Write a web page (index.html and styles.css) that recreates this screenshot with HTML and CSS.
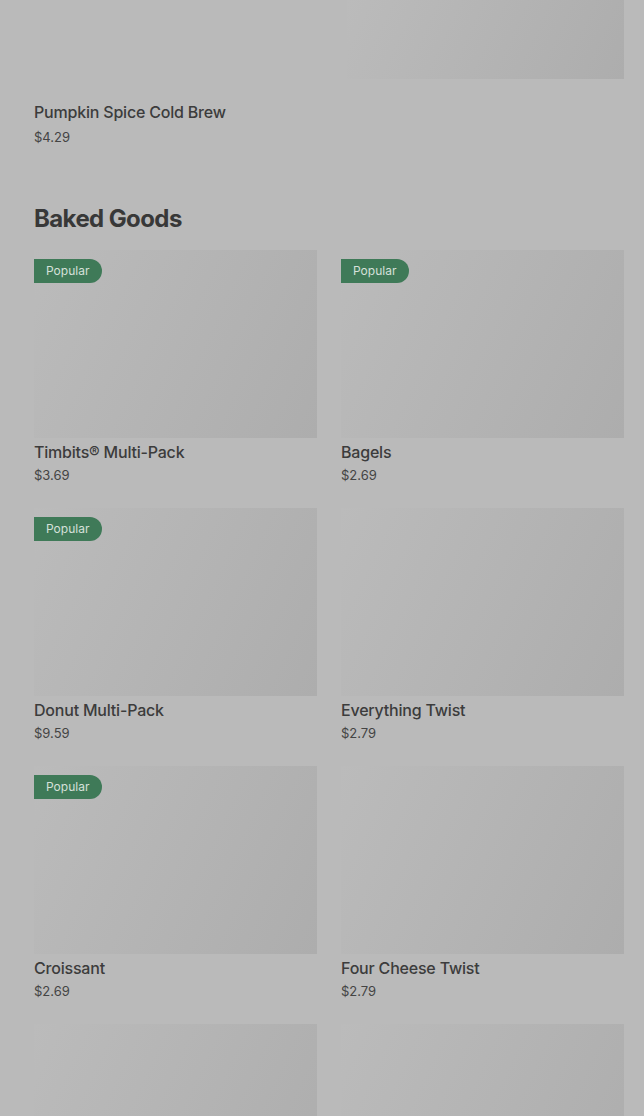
FILE: index.html
```html
<!DOCTYPE html>
<html lang="en">
<head>
    <meta charset="UTF-8">
    <meta name="viewport" content="width=device-width, initial-scale=1.0">
    <title>Menu</title>
    <link rel="stylesheet" href="styles.css">
</head>
<body>
    <div class="menu">
        <div class="top-row">
            <div class="item">
                <div class="thumb thumb-blank"></div>
                <p class="item-name item-name-top">Pumpkin Spice Cold Brew</p>
                <p class="item-price item-price-top">$4.29</p>
            </div>
            <div class="item">
                <div class="thumb"></div>
            </div>
        </div>

        <h2 class="section-title">Baked Goods</h2>
        <div class="grid">
            <div class="item">
                <div class="thumb tall"><span class="badge">Popular</span></div>
                <p class="item-name">Timbits® Multi-Pack</p>
                <p class="item-price">$3.69</p>
            </div>
            <div class="item">
                <div class="thumb tall"><span class="badge">Popular</span></div>
                <p class="item-name">Bagels</p>
                <p class="item-price">$2.69</p>
            </div>
            <div class="item">
                <div class="thumb tall"><span class="badge">Popular</span></div>
                <p class="item-name">Donut Multi-Pack</p>
                <p class="item-price">$9.59</p>
            </div>
            <div class="item">
                <div class="thumb tall"></div>
                <p class="item-name">Everything Twist</p>
                <p class="item-price">$2.79</p>
            </div>
            <div class="item">
                <div class="thumb tall"><span class="badge">Popular</span></div>
                <p class="item-name">Croissant</p>
                <p class="item-price">$2.69</p>
            </div>
            <div class="item">
                <div class="thumb tall"></div>
                <p class="item-name">Four Cheese Twist</p>
                <p class="item-price">$2.79</p>
            </div>
            <div class="item">
                <div class="thumb tall"></div>
            </div>
            <div class="item">
                <div class="thumb tall"></div>
            </div>
        </div>
    </div>
</body>
</html>
```

FILE: styles.css
```css
body {
    font-family: Inter, "Liberation Sans", sans-serif;
    background-color: #bababa;
    color: #3c3c3c;
    margin: 0;
    padding: 0;
    height: 1116px;
    overflow: hidden;
}
.menu {
    padding: 0 20px 0 34px;
}
.top-row {
    display: grid;
    grid-template-columns: 283px 1fr;
    gap: 30px;
}
.thumb {
    position: relative;
    height: 79px;
    background: linear-gradient(115deg, #bbbbbb, #adadad);
}
.thumb-blank {
    background: #bababa;
}
.tall {
    height: 188px;
}
.item-name {
    margin: 4px 0 0;
    font-size: 16px;
    line-height: 20px;
    font-weight: 500;
    letter-spacing: -0.2px;
}
.item-name-top {
    margin-top: 23px;
}
.item-price {
    margin: 4px 0 0;
    font-size: 13px;
    line-height: 18px;
    color: #444;
}
.item-price-top {
    margin-top: 6px;
}
.section-title {
    margin: 58px 0 16px;
    font-size: 24px;
    line-height: 30px;
    font-weight: 700;
    letter-spacing: -0.6px;
    color: #383838;
}
.grid {
    display: grid;
    grid-template-columns: 1fr 1fr;
    column-gap: 24px;
    row-gap: 24px;
}
.badge {
    position: absolute;
    top: 9px;
    left: 0;
    padding: 0 13px 0 12px;
    height: 24px;
    line-height: 24px;
    font-size: 12px;
    color: #d6e0da;
    background: #3f7a58;
    border-radius: 0 12px 12px 0;
}
```
